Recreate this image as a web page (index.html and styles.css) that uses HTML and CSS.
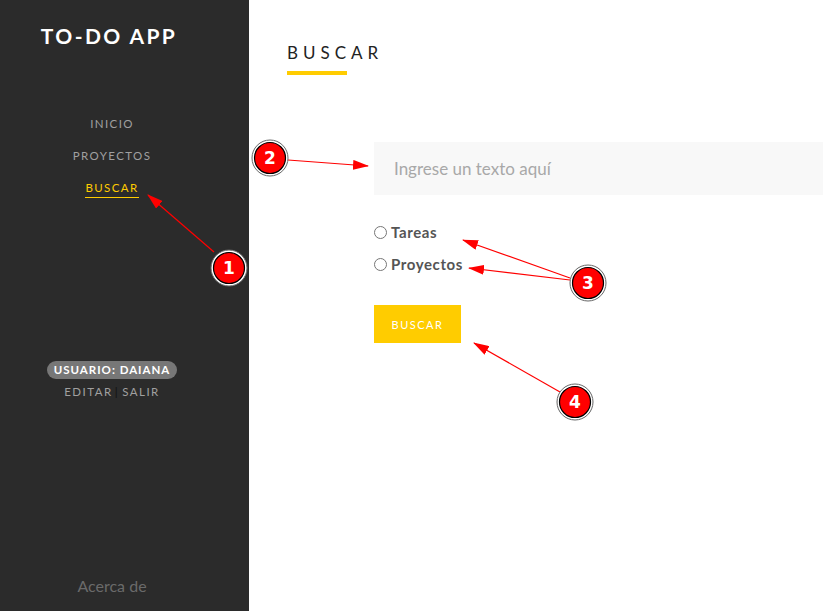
FILE: index.html
```html
<!DOCTYPE html>
<html lang="es">
<head>
<meta charset="utf-8">
<title>To-Do App</title>
<link rel="stylesheet" href="styles.css">
</head>
<body>
<div class="app">
  <aside class="sidebar">
    <h1 class="brand">TO-DO APP</h1>
    <nav class="nav">
      <a class="nav-link">INICIO</a>
      <a class="nav-link">PROYECTOS</a>
      <a class="nav-link active">BUSCAR</a>
    </nav>
    <div class="user">
      <span class="user-badge">USUARIO: DAIANA</span>
      <div class="user-actions"><a>EDITAR</a><span class="sep">|</span><a>SALIR</a></div>
    </div>
    <div class="about">Acerca de</div>
  </aside>
  <main class="main">
    <h2 class="page-title">BUSCAR</h2>
    <form class="search">
      <input class="search-input" type="text" placeholder="Ingrese un texto aquí">
      <div class="options">
        <label class="option"><input type="radio" name="t"> Tareas</label>
        <label class="option"><input type="radio" name="t"> Proyectos</label>
      </div>
      <button class="btn" type="button">BUSCAR</button>
    </form>
  </main>
</div>
<svg class="annotations" width="823" height="611" viewBox="0 0 823 611">
  <defs>
    <marker id="ah" markerWidth="16" markerHeight="10" refX="15" refY="5" orient="auto" markerUnits="userSpaceOnUse">
      <path d="M0,0 L16,5 L0,10 Z" fill="#ff0000"/>
    </marker>
  </defs>
  <g stroke="#ff0000" stroke-width="1.2" fill="none" marker-end="url(#ah)">
    <line x1="214" y1="252" x2="148" y2="195"/>
    <line x1="288" y1="160" x2="368" y2="166"/>
    <line x1="570" y1="278" x2="463" y2="240"/>
    <line x1="570" y1="280" x2="469" y2="268"/>
    <line x1="560" y1="392" x2="474" y2="343"/>
  </g>
  <g class="badge" transform="translate(229,268)"><circle r="18" fill="#fff" stroke="#666" stroke-width="1"/><circle r="15.5" fill="#ff0000" stroke="#000" stroke-width="1.2"/><text y="6" text-anchor="middle">1</text></g>
  <g class="badge" transform="translate(270,158)"><circle r="18" fill="#fff" stroke="#666" stroke-width="1"/><circle r="15.5" fill="#ff0000" stroke="#000" stroke-width="1.2"/><text y="6" text-anchor="middle">2</text></g>
  <g class="badge" transform="translate(588,283)"><circle r="18" fill="#fff" stroke="#666" stroke-width="1"/><circle r="15.5" fill="#ff0000" stroke="#000" stroke-width="1.2"/><text y="6" text-anchor="middle">3</text></g>
  <g class="badge" transform="translate(575,402)"><circle r="18" fill="#fff" stroke="#666" stroke-width="1"/><circle r="15.5" fill="#ff0000" stroke="#000" stroke-width="1.2"/><text y="6" text-anchor="middle">4</text></g>
</svg>
</body>
</html>
```
FILE: styles.css
```css
* { box-sizing: border-box; }
html, body { margin: 0; padding: 0; }
body {
  width: 823px;
  height: 611px;
  overflow: hidden;
  font-family: "Lato", "Open Sans", sans-serif;
  background: #fff;
  position: relative;
}
.app { display: flex; height: 611px; }
.sidebar {
  width: 249px;
  flex: none;
  background: #2b2b2b;
  display: flex;
  flex-direction: column;
  align-items: center;
  padding: 24px 25px 0 0;
}
.brand {
  margin: 0 0 0 -6px;
  color: #fff;
  font-size: 21px;
  font-weight: 700;
  letter-spacing: 2.4px;
  line-height: 24px;
}
.nav {
  margin-top: 67px;
  display: flex;
  flex-direction: column;
  align-items: center;
  gap: 13px;
}
.nav-link {
  color: #a0a0a0;
  font-size: 11.5px;
  letter-spacing: 1.4px;
  line-height: 17px;
  padding-bottom: 1px;
  border-bottom: 1px solid transparent;
}
.nav-link.active { color: #ffcc00; border-bottom-color: #ffcc00; }
.user {
  margin-top: 163px;
  display: flex;
  flex-direction: column;
  align-items: center;
  gap: 5px;
}
.user-badge {
  background: #777;
  color: #fff;
  font-weight: 700;
  font-size: 11.5px;
  letter-spacing: 1px;
  border-radius: 9px;
  padding: 1px 7px;
  line-height: 16px;
}
.user-actions {
  color: #a0a0a0;
  font-size: 11.5px;
  letter-spacing: 1.5px;
  line-height: 16px;
}
.user-actions .sep { color: #111; margin: 0 3px 0 2px; }
.about {
  margin-top: auto;
  margin-bottom: 15px;
  color: #6a6a6a;
  font-size: 16px;
  line-height: 20px;
}
.main {
  flex: 1;
  padding: 42px 0 0 38px;
}
.page-title {
  margin: 0;
  font-weight: 400;
  font-size: 17px;
  letter-spacing: 5px;
  color: #222;
  line-height: 22px;
  display: inline-block;
  padding-bottom: 1px;
}
.page-title::after {
  content: "";
  display: block;
  width: 60px;
  height: 4px;
  background: #ffcc00;
  margin-top: 7px;
}
.search {
  margin: 66px 0 0 87px;
  display: flex;
  flex-direction: column;
  align-items: flex-start;
}
.search-input {
  width: 449px;
  height: 53px;
  border: none;
  background: #f8f8f8;
  padding: 0 20px;
  font-family: inherit;
  font-size: 17px;
  color: #333;
  outline: none;
}
.search-input::placeholder { color: #a8a8a8; }
.options {
  margin-top: 27px;
  display: flex;
  flex-direction: column;
  gap: 12px;
}
.option {
  display: flex;
  align-items: center;
  font-weight: 700;
  font-size: 15px;
  letter-spacing: 0.6px;
  color: #555;
  line-height: 20px;
  gap: 4px;
}
.option input { margin: 0; width: 13px; height: 13px; }
.btn {
  margin-top: 31px;
  width: 87px;
  height: 38px;
  border: none;
  background: #ffcc00;
  color: #fff;
  font-family: inherit;
  font-size: 11px;
  letter-spacing: 1.5px;
}
.annotations { position: absolute; left: 0; top: 0; pointer-events: none; }
.badge text { fill: #fff; font-family: "DejaVu Sans", sans-serif; font-weight: 700; font-size: 17px; }
```
